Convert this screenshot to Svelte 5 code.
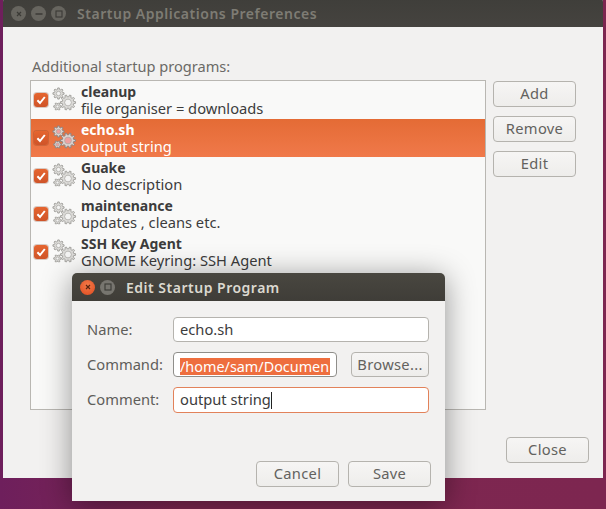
<script>
  const programs = [
    { name: 'cleanup', desc: 'file organiser = downloads' },
    { name: 'echo.sh', desc: 'output string', selected: true },
    { name: 'Guake', desc: 'No description' },
    { name: 'maintenance', desc: 'updates , cleans etc.' },
    { name: 'SSH Key Agent', desc: 'GNOME Keyring: SSH Agent' }
  ];

  // cog outline around a centre, with a given number of teeth
  function cog(cx, cy, r, teeth) {
    const pts = [];
    const inner = r * 0.76;
    const step = (Math.PI * 2) / teeth;
    for (let i = 0; i < teeth; i++) {
      const a = i * step;
      const w = step * 0.22;
      pts.push([a - w * 1.3, inner], [a - w * 0.8, r], [a + w * 0.8, r], [a + w * 1.3, inner]);
    }
    const d = pts.map(([a, len]) => `${(cx + Math.cos(a) * len).toFixed(2)} ${(cy + Math.sin(a) * len).toFixed(2)}`);
    return 'M' + d.join('L') + 'Z';
  }
</script>

{#snippet gears()}
  <svg class="gears" width="26" height="26" viewBox="0 0 26 26">
    <path class="cog" d={cog(6.5, 6.5, 5.6, 8)} />
    <circle class="hole" cx="6.5" cy="6.5" r="2.2" />
    <path class="cog" d={cog(16, 15.5, 7.6, 10)} />
    <circle class="hole" cx="16" cy="15.5" r="3.4" />
    <path class="cog" d={cog(5.5, 19.5, 3.8, 6)} />
    <circle class="hole" cx="5.5" cy="19.5" r="1.5" />
  </svg>
{/snippet}

{#snippet check()}
  <span class="check">
    <svg width="14" height="14" viewBox="0 0 14 14">
      <path d="M3.4 7.2 6 10 10.8 4" fill="none" stroke="#fff" stroke-width="2" />
    </svg>
  </span>
{/snippet}

<div class="desktop">
  <section class="window main">
    <header class="titlebar">
      <div class="controls inactive">
        <span class="ctl">
          <svg width="8" height="8" viewBox="0 0 8 8"><path d="M2 2 6 6M6 2 2 6" stroke="#3b3a36" stroke-width="1.2" /></svg>
        </span>
        <span class="ctl">
          <svg width="8" height="8" viewBox="0 0 8 8"><path d="M0.5 4H7.5" stroke="#3b3a36" stroke-width="1.4" /></svg>
        </span>
        <span class="ctl">
          <svg width="8" height="8" viewBox="0 0 8 8"><rect x="1" y="1" width="6" height="6" fill="none" stroke="#3b3a36" stroke-width="1.1" /></svg>
        </span>
      </div>
      <h1>Startup Applications Preferences</h1>
    </header>

    <div class="main-body">
      <p class="heading">Additional startup programs:</p>
      <div class="columns">
        <ul class="list">
          {#each programs as p}
            <li class="row" class:selected={p.selected}>
              {@render check()}
              {@render gears()}
              <div class="row-text">
                <strong>{p.name}</strong>
                <span>{p.desc}</span>
              </div>
            </li>
          {/each}
        </ul>
        <div class="side">
          <button>Add</button>
          <button>Remove</button>
          <button>Edit</button>
        </div>
      </div>
      <div class="close-row">
        <button>Close</button>
      </div>
    </div>
  </section>

  <section class="window dialog">
    <header class="titlebar small">
      <div class="controls">
        <span class="ctl close">
          <svg width="8" height="8" viewBox="0 0 8 8"><path d="M2 2 6 6M6 2 2 6" stroke="#5a2410" stroke-width="1.2" /></svg>
        </span>
        <span class="ctl max">
          <svg width="8" height="8" viewBox="0 0 8 8"><rect x="1" y="1" width="6" height="6" fill="none" stroke="#3b3a36" stroke-width="1.1" /></svg>
        </span>
      </div>
      <h2>Edit Startup Program</h2>
    </header>

    <div class="dialog-body">
      <div class="form">
        <span class="label">Name:</span>
        <div class="field wide">echo.sh</div>

        <span class="label">Command:</span>
        <div class="command">
          <div class="field"><span class="sel">/home/sam/Documen</span></div>
          <button>Browse...</button>
        </div>

        <span class="label">Comment:</span>
        <div class="field wide focus">output string<i class="caret"></i></div>
      </div>
      <div class="actions">
        <button>Cancel</button>
        <button>Save</button>
      </div>
    </div>
  </section>
</div>

<style>
  :global(body) {
    margin: 0;
  }

  .desktop {
    position: relative;
    width: 606px;
    height: 509px;
    overflow: hidden;
    font-family: "Noto Sans", "Open Sans", sans-serif;
    font-size: 14.7px;
    color: #3c3c3c;
    background: linear-gradient(90deg, #6e1f5c 0, #7e2750 30%, #7d2650 100%);
  }

  .window {
    position: absolute;
    display: flex;
    flex-direction: column;
    background: #f2f1f0;
    border-radius: 5px 5px 0 0;
    overflow: hidden;
  }

  .main {
    left: 3px;
    top: -3px;
    width: 600px;
    height: 481px;
  }

  .dialog {
    left: 72px;
    top: 273px;
    width: 373px;
    height: 228px;
    overflow: visible;
    box-shadow: 0 4px 30px rgba(0, 0, 0, 0.42);
  }

  .titlebar {
    flex: none;
    display: flex;
    align-items: center;
    height: 30px;
    padding: 3px 0 0 8px;
    box-sizing: border-box;
    background: linear-gradient(#3f3e3a, #45433f);
  }

  .titlebar.small {
    height: 28px;
    padding: 0 0 0 8px;
    border-radius: 5px 5px 0 0;
    background: linear-gradient(#494740, #3f3d38);
  }

  .titlebar h1,
  .titlebar h2 {
    margin: 0;
    font-size: 14px;
    font-weight: 600;
    white-space: nowrap;
  }

  .titlebar h1 {
    margin-left: 11px;
    letter-spacing: 0.52px;
    color: #7e7c74;
  }

  .titlebar h2 {
    margin-left: 11px;
    letter-spacing: 0.5px;
    color: #dcd9d0;
  }

  .controls {
    display: flex;
    gap: 5px;
  }

  .ctl {
    display: flex;
    align-items: center;
    justify-content: center;
    width: 15px;
    height: 15px;
    border-radius: 50%;
    background: #67655f;
  }

  .ctl.close {
    background: radial-gradient(circle at 50% 35%, #f37a48, #de4a20);
  }

  .ctl.max {
    background: #77756f;
  }

  .main-body {
    flex: 1;
    display: flex;
    flex-direction: column;
    padding: 29px 14px 15px 27px;
    min-height: 0;
  }

  .heading {
    margin: 0 0 4px 2px;
    line-height: 20px;
    font-size: 14.6px;
    color: #6b6a66;
  }

  .columns {
    display: flex;
    gap: 7px;
  }

  .list {
    margin: 0;
    padding: 0;
    list-style: none;
    box-sizing: border-box;
    width: 456px;
    height: 330px;
    border: 1px solid #b9b7b2;
    background: #f9f9f8;
  }

  .row {
    display: flex;
    align-items: center;
    height: 38px;
    padding-left: 3px;
    box-sizing: border-box;
  }

  .row.selected {
    color: #fff;
    background: linear-gradient(#e46b35, #f0794a);
  }

  .check {
    flex: none;
    width: 14px;
    height: 14px;
    border-radius: 3px;
    background: linear-gradient(#e5652f, #cf5428);
    box-shadow: 0 0 0 1px rgba(120, 60, 30, 0.25);
  }

  .check svg {
    display: block;
  }

  .gears {
    flex: none;
    margin-left: 4px;
  }

  .cog {
    fill: #dcdbd8;
    stroke: #a5a4a0;
    stroke-width: 1;
  }

  .hole {
    fill: #f4f4f3;
    stroke: #acaba7;
    stroke-width: 0.8;
  }

  .selected .cog {
    fill: #dcd3cf;
    stroke: #8f8481;
  }

  .selected .hole {
    fill: #f0a0a0;
  }

  .row-text {
    display: flex;
    flex-direction: column;
    margin-left: 3px;
    line-height: 17px;
    white-space: nowrap;
  }

  .row-text strong {
    font-weight: 700;
    font-size: 14px;
  }

  .side {
    display: flex;
    flex-direction: column;
    gap: 9px;
    padding-top: 1px;
  }

  button {
    width: 83px;
    height: 26px;
    padding: 0 0 2px;
    box-sizing: border-box;
    border: 1px solid #b5b3ae;
    border-radius: 4px;
    background: linear-gradient(#f6f5f4, #eeedeb);
    font: inherit;
    color: #63625e;
    letter-spacing: 0.3px;
  }

  .close-row {
    display: flex;
    justify-content: flex-end;
    margin-top: auto;
  }

  .dialog-body {
    flex: 1;
    display: flex;
    flex-direction: column;
    padding: 16px 14px 14px 15px;
    background: #f2f1f0;
  }

  .form {
    display: grid;
    grid-template-columns: 86px 256px;
    row-gap: 10px;
    align-items: center;
  }

  .label {
    color: #5f5e5a;
    margin-top: -2px;
  }

  .field {
    box-sizing: border-box;
    height: 25px;
    padding: 0 6px;
    line-height: 22px;
    overflow: hidden;
    white-space: nowrap;
    border: 1px solid #b5b3ae;
    border-radius: 4px;
    background: #fff;
  }

  .field.focus {
    height: 26px;
    border-color: #e2825a;
  }

  .command {
    display: flex;
    justify-content: space-between;
  }

  .command .field {
    width: 164px;
    border-color: #8f8e8a;
  }

  .command button {
    width: 78px;
    height: 25px;
  }

  .sel {
    display: inline-block;
    width: 150px;
    height: 17px;
    line-height: 17px;
    font-size: 14.4px;
    overflow: hidden;
    color: #fff;
    background: #ee6e3e;
    vertical-align: middle;
    margin-top: 1px;
  }

  .caret {
    display: inline-block;
    width: 1px;
    height: 17px;
    background: #222;
    vertical-align: -4px;
  }

  .actions {
    display: flex;
    justify-content: flex-end;
    gap: 9px;
    margin-top: auto;
  }
</style>
